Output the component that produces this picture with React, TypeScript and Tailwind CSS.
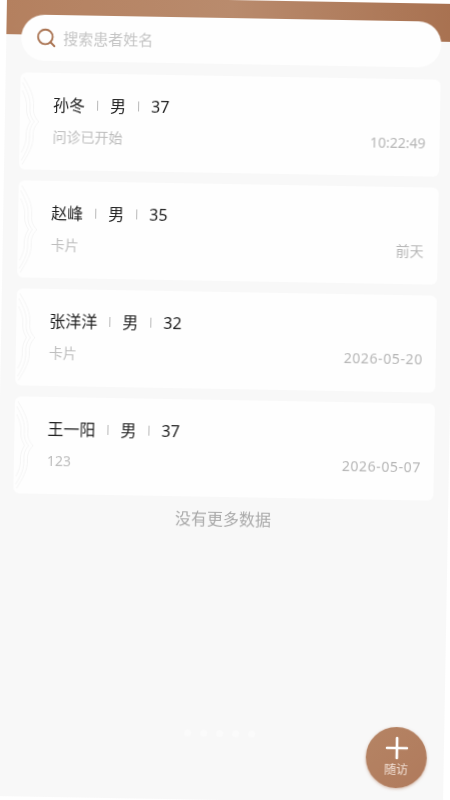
import { Plus, Search } from 'lucide-react';

const patients = [
  { name: '孙冬', gender: '男', age: '37', note: '问诊已开始', time: '10:22:49' },
  { name: '赵峰', gender: '男', age: '35', note: '卡片', time: '前天' },
  { name: '张洋洋', gender: '男', age: '32', note: '卡片', time: '2026-05-20', isDate: true },
  { name: '王一阳', gender: '男', age: '37', note: '123', time: '2026-05-07', isDate: true },
];

function CardOrnament() {
  return (
    <svg
      className="absolute left-0 top-0 h-[97px] w-[22px]"
      viewBox="0 0 22 97"
      fill="none"
      stroke="#f4f4f4"
      strokeWidth="1"
    >
      <path d="M3 5C10 16 14 24 13.500 34C13 41 15 45 19 49C15 53 13 58 13.500 64C14 73 9 82 3 92" />
      <path d="M2 10C7 19 10.500 26 10 35C9.500 41 11 45 14.500 49C11 53 9.500 58 10 63C10.500 72 7 80 2 88" />
      <path d="M2 18C5 24 7 29 6.500 36C6.500 42 8 45 10.500 49C8 53 6.500 57 6.500 62C7 69 5 75 2 80" />
    </svg>
  );
}

function PatientCard({ name, gender, age, note, time, isDate }: (typeof patients)[number]) {
  return (
    <div className="relative h-[97px] rounded-md bg-[#fefefe] pl-[33px] pr-[14px] pt-[20px]">
      <CardOrnament />
      <div className="flex h-6 items-center gap-[12px] text-base text-[#1f1f1f]">
        <span>{name}</span>
        <span className="h-[10px] w-px bg-[#b8b8b8]" />
        <span>{gender}</span>
        <span className="h-[10px] w-px bg-[#b8b8b8]" />
        <span>{age}</span>
      </div>
      <div className="mt-2 flex h-6 items-center justify-between">
        <span className="text-sm text-[#bdbdbd]">{note}</span>
        <span className={isDate ? '-mr-px text-sm tracking-[0.6px] text-[#b6b6b6]' : 'text-sm text-[#b6b6b6]'}>{time}</span>
      </div>
    </div>
  );
}

export default function App() {
  return (
    <div className="h-[800px] w-[450px] overflow-hidden bg-white">
      {/* the whole screen sits about 1deg off level */}
      <div
        className="relative h-[800px] w-[450px] rotate-[1deg] bg-[#f8f8f8] blur-[0.4px]"
        style={{ fontFamily: '"Noto Sans", "Noto Sans CJK SC", sans-serif' }}
      >
        <div className="h-[38px] bg-gradient-to-r from-[#b4805f] via-[#b98b6d] to-[#a87150]" />

        <div className="-mt-[20px] px-[15px]">
          <div className="flex h-[46px] items-center gap-[6px] rounded-full bg-[#fefefe] pl-[14px]">
            <Search className="h-[22px] w-[22px] text-[#a8714f]" strokeWidth={2} />
            <span className="text-[15px] text-[#c4c4c4]">搜索患者姓名</span>
          </div>
        </div>

        <div className="mt-3 flex flex-col gap-[11px] px-[15px]">
          {patients.map((p) => (
            <PatientCard key={p.name} {...p} />
          ))}
        </div>

        <div className="mt-[10px] text-center text-base text-[#a9a9a9]">没有更多数据</div>

        <div className="absolute bottom-[63px] left-0 right-0 flex justify-center gap-[9px]">
          {[0, 1, 2, 3, 4].map((i) => (
            <span key={i} className="h-[7px] w-[7px] rounded-full bg-[#fbfbfb]" />
          ))}
        </div>

        <button className="absolute bottom-[15px] right-[17px] flex h-[61px] w-[61px] flex-col items-center rounded-full bg-gradient-to-br from-[#b58464] to-[#b07a5c] pt-[4px] text-white shadow-[0_1px_3px_rgba(176,122,92,0.5)]">
          <Plus className="h-[34px] w-[34px]" strokeWidth={1.9} />
          <span className="-mt-[3px] text-xs leading-[16px] text-[#f2e0d5]">随访</span>
        </button>
      </div>
    </div>
  );
}
